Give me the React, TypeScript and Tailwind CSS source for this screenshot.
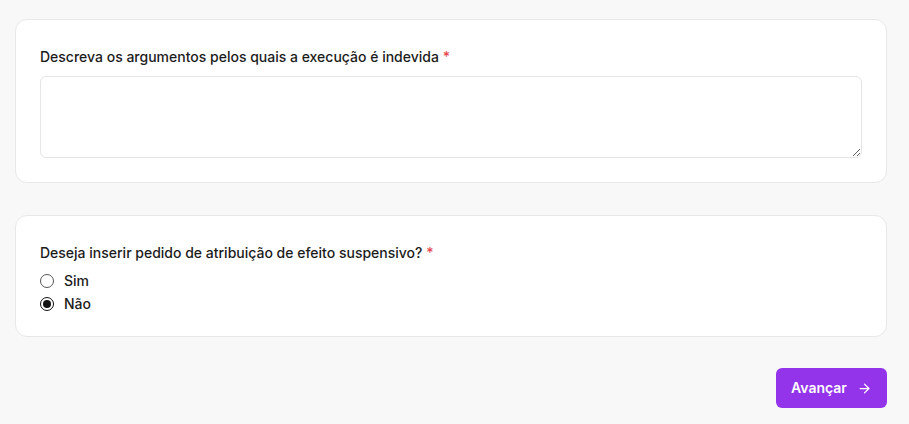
import { ArrowRight } from 'lucide-react';

const font = { fontFamily: 'Inter, "Noto Sans", sans-serif' };

function Label({ children }: { children: React.ReactNode }) {
  return (
    <label className="block text-sm leading-5 font-medium text-[#1c1c1c]">
      {children} <span className="text-[#e5484d]">*</span>
    </label>
  );
}

function Radio({ label, checked }: { label: string; checked?: boolean }) {
  return (
    <div className="flex h-5 items-center gap-[10px]">
      <span
        className={
          'flex h-[14px] w-[14px] items-center justify-center rounded-full border ' +
          (checked ? 'border-[#111] border-[1.5px]' : 'border-[#555]')
        }
      >
        {checked && <span className="h-[8px] w-[8px] rounded-full bg-[#111]" />}
      </span>
      <span className="text-sm font-medium text-[#1c1c1c]">{label}</span>
    </div>
  );
}

export default function App() {
  return (
    <div className="min-h-screen bg-[#f8f8f8] pl-[15px] pt-[19px]" style={font}>
      <div className="w-[872px]">
        <div className="rounded-xl border border-[#e8e8e8] bg-white px-6 pt-[27px] pb-6">
          <Label>Descreva os argumentos pelos quais a execução é indevida</Label>
          <textarea className="mt-[9px] block h-[82px] w-full rounded-md border border-[#e5e5e5] bg-white px-3 py-2 text-sm outline-none" />
        </div>

        <div className="mt-[32px] rounded-xl border border-[#e8e8e8] bg-white px-6 pt-[27px] pb-[22px]">
          <Label>Deseja inserir pedido de atribuição de efeito suspensivo?</Label>
          <div className="mt-2 flex flex-col gap-[3px]">
            <Radio label="Sim" />
            <Radio label="Não" checked />
          </div>
        </div>

        <div className="mt-[31px] flex justify-end">
          <button className="flex h-10 w-[111px] items-center justify-center gap-[10px] rounded-md bg-[#9333ea] text-sm font-semibold text-white">
            Avançar
            <ArrowRight size={15} strokeWidth={2} />
          </button>
        </div>
      </div>
    </div>
  );
}
